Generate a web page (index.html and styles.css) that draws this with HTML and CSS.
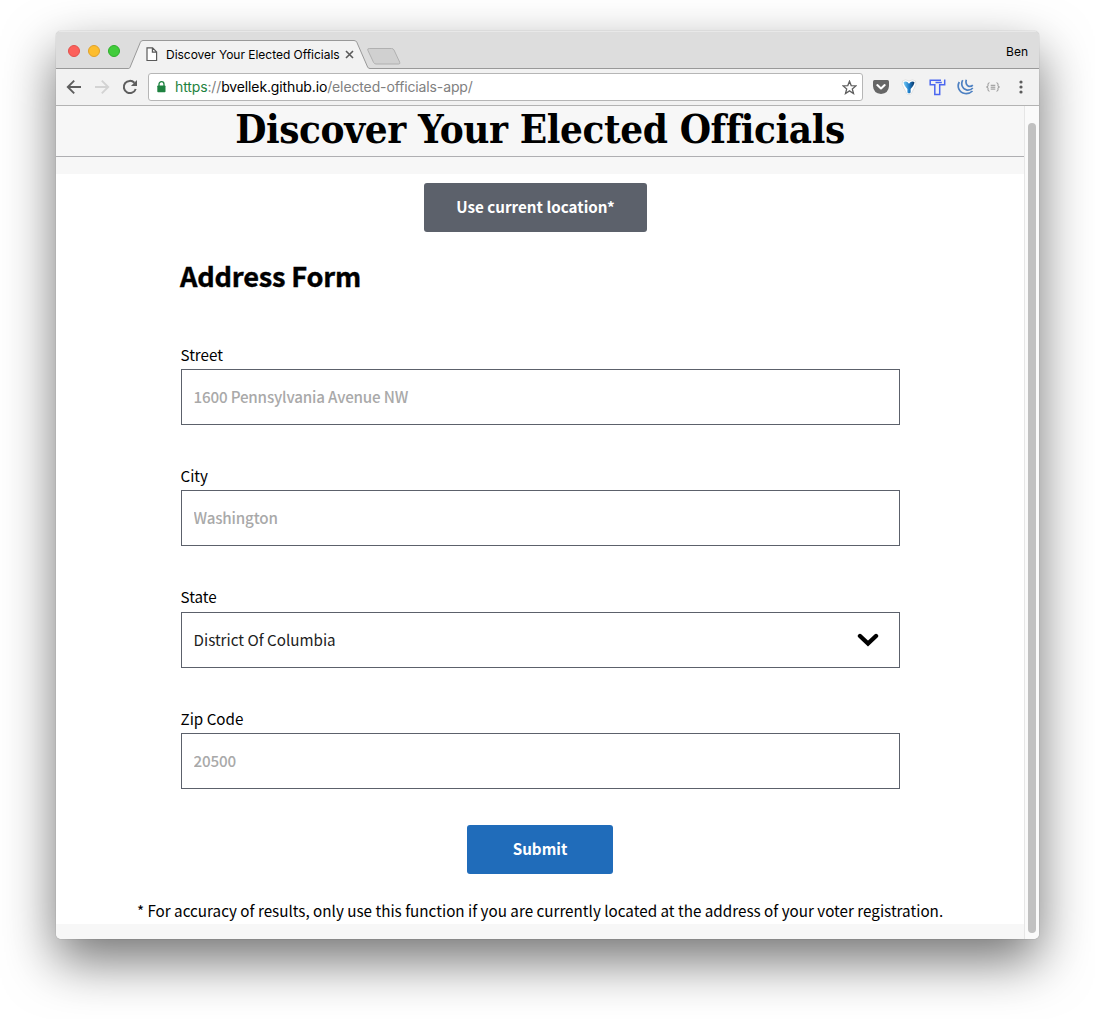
FILE: index.html
```html
<!DOCTYPE html>
<html lang="en">
<head>
<meta charset="utf-8">
<title>Discover Your Elected Officials</title>
<link rel="stylesheet" href="styles.css">
</head>
<body>
<div class="window">
  <div class="tabstrip">
    <div class="lights">
      <span class="light light-close"></span>
      <span class="light light-min"></span>
      <span class="light light-max"></span>
    </div>
    <div class="tab">
      <svg class="tab-shape" width="244" height="29" viewBox="0 0 244 29">
        <path d="M0 28.5H.5Q1.500 28.5 2.1 27.2L12.4 2.2Q13.2.5 15 .5H226Q228 .5 228.8 2.2L239.6 27Q240.3 28.5 242 28.5H244V29H0Z" fill="#f2f2f2"/>
        <path d="M0 28.5H.5Q1.500 28.5 2.1 27.2L12.4 2.2Q13.2.5 15 .5H226Q228 .5 228.8 2.2L239.6 27Q240.3 28.5 242 28.5H244" fill="none" stroke="#999"/>
      </svg>
      <svg class="tab-page" width="12" height="15" viewBox="0 0 12 15"><path d="M1 .9H6.6L10.6 4.9V13.5H1ZM6.4 1V5.1H10.5" fill="#fff" stroke="#5a5a5a" stroke-width="1.2"/></svg>
      <span class="tab-title">Discover Your Elected Officials</span>
      <svg class="tab-close" width="9" height="9" viewBox="0 0 9 9"><path d="M1 1L8 8M8 1L1 8" stroke="#5a5a5a" stroke-width="1.6"/></svg>
    </div>
    <svg class="new-tab" width="34" height="17" viewBox="0 0 34 17"><path d="M2.2.5H24.5Q26.3.5 27 2L32.7 14.2Q33.4 16 31.8 16H9Q7.4 16 6.6 14.5L.8 2.2Q.2.5 2.2.5Z" fill="#d0d0d0" stroke="#b0b0b0"/></svg>
    <span class="profile">Ben</span>
  </div>
  <div class="toolbar">
    <span class="tool"><svg width="16" height="16" viewBox="0 0 16 16"><path d="M15 8H2M8.2 1.6L1.8 8L8.2 14.4" fill="none" stroke="#5e5e5e" stroke-width="1.9"/></svg></span>
    <span class="tool"><svg width="16" height="16" viewBox="0 0 16 16"><path d="M1 8H14M7.8 1.6L14.2 8L7.8 14.4" fill="none" stroke="#d3d3d3" stroke-width="1.9"/></svg></span>
    <span class="tool"><svg width="16" height="16" viewBox="0 0 16 16"><path d="M13.7 10A6.1 6.1 0 1 1 12.4 3.8" fill="none" stroke="#5e5e5e" stroke-width="2"/><path d="M15 .9V7H8.9Z" fill="#5e5e5e"/></svg></span>
    <div class="omnibox">
      <svg width="9" height="12" viewBox="0 0 9 12"><path d="M2 5V3.2a2.4 2.4 0 0 1 5 0V5" fill="none" stroke="#1e8240" stroke-width="1.3"/><rect x=".3" y="4.5" width="8.2" height="6.7" rx=".8" fill="#1e8240"/></svg>
      <span class="url"><span class="url-scheme">https</span><span class="url-dim">://</span>bvellek.github.io<span class="url-dim">/elected-officials-app/</span></span>
      <svg class="star" width="15" height="15" viewBox="0 0 15 15"><path d="M7.5 1.2L9.2 5.6L13.9 5.9L10.3 8.9L11.5 13.5L7.5 10.9L3.5 13.5L4.7 8.9L1.1 5.9L5.8 5.6Z" fill="none" stroke="#606060" stroke-width="1.3"/></svg>
    </div>
    <span class="tool"><svg width="16" height="14" viewBox="0 0 16 14"><path d="M1.500 0H14.500Q16 0 16 1.500V6Q15.600 13.400 8 14Q.4 13.400 0 6V1.500Q0 0 1.500 0Z" fill="#666"/><path d="M4.300 5.100L8 8.500L11.700 5.100" fill="none" stroke="#fff" stroke-width="2.100" stroke-linecap="round" stroke-linejoin="round"/></svg></span>
    <span class="tool"><svg width="16" height="16" viewBox="0 0 16 16"><defs><linearGradient id="vee" x1="0" x2="1"><stop offset="0" stop-color="#7accf5"/><stop offset=".5" stop-color="#1f7fcb"/><stop offset="1" stop-color="#093463"/></linearGradient></defs><path d="M1.500 2Q4.500-.3 8 2Q11.500-.3 14.500 2Q16 5 13 9.500L10 15Q8 16.500 6 15L3 9.500Q0 5 1.500 2Z" fill="#fff" stroke="#d4d4d4" stroke-width=".6"/><path d="M2.600 3Q5.800 1.500 8 4.800Q10.200 1.500 13.400 3Q13.500 6 9.600 10V13.500Q8 15.200 6.400 13.500V10Q2.500 6 2.600 3Z" fill="url(#vee)"/></svg></span>
    <span class="tool"><svg width="17" height="17" viewBox="0 0 17 17"><path d="M12 1.300H1.200V5.700H5.800V15.600H10.700V5.700H15.700V.5M6.500 3.500H12.800" fill="none" stroke="#4a66f0" stroke-width="1.500"/></svg></span>
    <span class="tool"><svg width="17" height="16" viewBox="0 0 17 16"><path d="M2.300 3C-.3 7.500 2 13.600 8 14.500Q12.500 15 15.500 12M5.700 1.200C3.300 5.500 5.800 10.400 10 11.100Q13.500 11.500 15.800 9M9.300 .8C8.300 4 9.800 6.900 12 7.400Q14.300 7.700 15.800 6.200" fill="none" stroke="#4d80c2" stroke-width="1.700"/></svg></span>
    <span class="tool"><svg width="14" height="10" viewBox="0 0 14 10"><path d="M3.500.8Q2 .8 2 2.200V3.800Q2 5 .5 5Q2 5 2 6.200V7.800Q2 9.200 3.500 9.200M10.500.8Q12 .8 12 2.200V3.800Q12 5 13.500 5Q12 5 12 6.200V7.800Q12 9.200 10.500 9.200M4.700 3.300H9.300M4.700 5.200H9.300M4.700 7.100H9.300" fill="none" stroke="#929292" stroke-width="1"/></svg></span>
    <span class="tool"><svg width="4" height="14" viewBox="0 0 4 14"><g fill="#5c5c5c"><circle cx="2" cy="2" r="1.600"/><circle cx="2" cy="7" r="1.600"/><circle cx="2" cy="12" r="1.600"/></g></svg></span>
  </div>
  <div class="viewport">
    <div class="page">
      <header class="page-header"><h1>Discover Your Elected Officials</h1></header>
      <main class="main">
        <button class="btn btn-location">Use current location*</button>
        <form class="form">
          <h2>Address Form</h2>
          <label class="field"><span class="label">Street</span><input class="control" placeholder="1600 Pennsylvania Avenue NW"></label>
          <label class="field"><span class="label">City</span><input class="control" placeholder="Washington"></label>
          <label class="field"><span class="label label-select">State</span>
            <span class="control select">District Of Columbia
              <svg class="chevron" width="22" height="14" viewBox="0 0 22 14"><path d="M3 3L11 10.500L19 3" fill="none" stroke="#000" stroke-width="4.400" stroke-linecap="round"/></svg>
            </span>
          </label>
          <label class="field"><span class="label">Zip Code</span><input class="control" placeholder="20500"></label>
        </form>
        <button class="btn btn-submit">Submit</button>
        <p class="note">* For accuracy of results, only use this function if you are currently located at the address of your voter registration.</p>
      </main>
    </div>
    <div class="scrollbar"><div class="thumb"></div></div>
  </div>
</div>
</body>
</html>
```
FILE: styles.css
```css
* { box-sizing: border-box; }
html { background: #fff; }
body {
  margin: 0;
  height: 1019px;
  overflow: hidden;
  padding: 31px 0 0 56px;
  font-family: "Noto Sans CJK SC", sans-serif;
  color: #000;
}
.window {
  width: 983px;
  height: 908px;
  display: flex;
  flex-direction: column;
  border-radius: 5px;
  overflow: hidden;
  background: #f7f7f7;
  box-shadow: 0 0 1px rgba(0, 0, 0, .45), 0 22px 52px rgba(0, 0, 0, .55);
}
.tabstrip {
  height: 38px;
  flex: none;
  display: flex;
  align-items: flex-start;
  background: #ddd;
  box-shadow: inset 0 -1px #999, inset 0 1px #e8e8e8;
  font: 12px Inter, sans-serif;
}
.lights { display: flex; gap: 8px; padding: 14px 0 0 12px; width: 72px; flex: none; }
.light { width: 12px; height: 12px; border-radius: 50%; border: 1px solid; flex: none; }
.light-close { background: #fc605b; border-color: #e2504c; }
.light-min { background: #fdbd2e; border-color: #e0a12a; }
.light-max { background: #41cc3b; border-color: #2eae2b; }
.tab {
  position: relative;
  width: 244px;
  height: 29px;
  margin-top: 9px;
  flex: none;
  display: flex;
  align-items: center;
}
.tab-shape { position: absolute; left: 0; top: 0; }
.tab-page { position: relative; margin-left: 18px; }
.tab-title { position: relative; width: 175px; margin-left: 8px; white-space: nowrap; letter-spacing: -.02px; }
.tab-close { position: relative; margin-left: 4px; }
.new-tab { margin: 17px 0 0 -5px; flex: none; position: relative; }
.profile { margin: 13px 11px 0 auto; line-height: 15px; }
.toolbar {
  height: 37px;
  flex: none;
  display: flex;
  align-items: center;
  padding: 0 4px;
  background: #f2f2f2;
  border-bottom: 1px solid #b3b3b3;
}
.tool { width: 28px; flex: none; display: flex; justify-content: center; align-items: center; }
.omnibox {
  flex: 1;
  height: 28px;
  margin: 0 4px;
  padding: 0 5px 0 8px;
  display: flex;
  align-items: center;
  background: #fff;
  border: 1px solid #b6b6b6;
  border-radius: 3px;
}
.url { margin-left: 9px; padding-bottom: 1px; font: 14px Inter, sans-serif; letter-spacing: -.13px; white-space: nowrap; }
.url-scheme { color: #1e8240; }
.url-dim { color: #808080; }
.star { margin-left: auto; }
.viewport { flex: 1; min-height: 0; display: flex; }
.page { flex: 1; display: flex; flex-direction: column; background: #f7f7f7; }
.page-header { height: 51px; flex: none; border-bottom: 1px solid #afafb2; display: flex; justify-content: center; }
h1 {
  margin: 0;
  font: bold 40px/46px "DejaVu Serif Condensed", "DejaVu Serif", serif;
  font-stretch: condensed;
  letter-spacing: -.4px;
  white-space: nowrap;
}
.main {
  height: 750px;
  margin-top: 17px;
  padding-top: 9px;
  display: flex;
  flex-direction: column;
  align-items: center;
  background: #fff;
}
.btn {
  height: 49px;
  flex: none;
  padding: 0 0 2px;
  border: 0;
  border-radius: 3px;
  color: #fff;
  font: bold 15.200px/47px "Noto Sans CJK SC", sans-serif;
  white-space: nowrap;
}
.btn-location { width: 223px; margin-right: 9px; background: #5c616b; }
.btn-submit { width: 146px; margin-top: 36px; background: #206cba; }
.form { width: 719px; margin-left: 1px; display: flex; flex-direction: column; }
h2 { margin: 25px 0 0 -1px; height: 84px; font-size: 27.200px; line-height: 36px; letter-spacing: -.2px; -webkit-text-stroke: .4px #000; white-space: nowrap; }
.field { display: block; }
.field + .field { margin-top: 37px; }
.label { display: block; height: 28px; margin-left: -.5px; font-size: 15.200px; line-height: 27px; }
.label-select { height: 29px; }
.control {
  display: flex;
  align-items: center;
  width: 100%;
  height: 56px;
  padding: 0 11.500px 2px;
  background: #fff;
  border: 1px solid #5c616b;
  border-radius: 0;
  font: 15.200px "Noto Sans CJK SC", sans-serif;
  color: #212121;
}
.control::placeholder { color: #a9a9a9; opacity: 1; font-weight: 500; letter-spacing: -.18px; }
.select { justify-content: space-between; padding: 0 20px 2px 11.500px; }
.chevron { margin-top: 2px; }
.note { margin: 24px 0 0; font-size: 15.220px; line-height: 24px; white-space: nowrap; }
.scrollbar { width: 15px; flex: none; padding: 17px 3px 6px; background: #fafafa; border-left: 1px solid #e6e6e6; }
.thumb { width: 8px; height: 100%; border-radius: 4px; background: #c1c1c1; }
```
